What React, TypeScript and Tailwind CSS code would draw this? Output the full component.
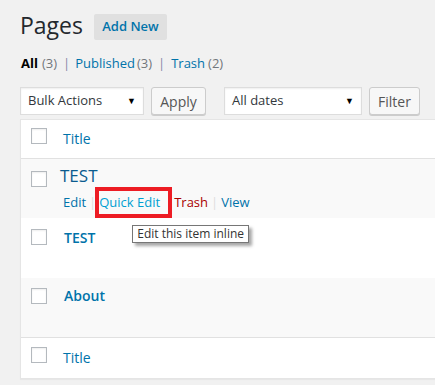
import React from "react";

const font = { fontFamily: '"Open Sans", "Liberation Sans", sans-serif' };

const Checkbox: React.FC = () => (
  <span className="block h-4 w-4 shrink-0 border border-[#b4b9be] bg-white shadow-[inset_0_1px_2px_rgba(0,0,0,0.07)]" />
);

const Select: React.FC<{ label: string; width: string }> = ({ label, width }) => (
  <div
    className={`flex h-7 items-center justify-between border border-[#ddd] bg-white pl-[7px] pr-[7px] text-[13px] text-[#32373c] shadow-[inset_0_1px_2px_rgba(0,0,0,0.07)] ${width}`}
  >
    <span>{label}</span>
    <span className="text-[9px] text-black">▼</span>
  </div>
);

const Button: React.FC<{ label: string; width: string }> = ({ label, width }) => (
  <div
    className={`flex h-7 items-center justify-center rounded-[3px] border border-[#ccc] bg-[#f7f7f7] text-[14px] text-[#555] shadow-[0_1px_0_#ccc] ${width}`}
  >
    {label}
  </div>
);

const Sep: React.FC = () => <span className="mx-[3px] text-[#ddd]">|</span>;

export default function App() {
  return (
    <div
      className="h-[385px] w-[435px] overflow-hidden bg-[#f1f1f1]"
      style={font}
    >
      <div className="pl-5 pt-[11px]">
        <div className="flex items-center gap-[11px]">
          <h1 className="text-[23px] font-normal leading-[29px] text-[#23282d]">
            Pages
          </h1>
          <div className="mt-[3px] flex h-[26px] w-[73px] items-center justify-center rounded-[2px] bg-[#e0e0e0] text-[13px] font-semibold text-[#0073aa]">
            Add New
          </div>
        </div>

        <div className="mt-[14px] flex h-5 items-center text-[13px] text-[#555]">
          <span className="ml-px font-bold text-black">All</span>
          <span className="ml-[4px] text-[#72777c]">(3)</span>
          <span className="ml-[6px] mr-[5px] text-[#8a86a8]">|</span>
          <span className="text-[#0073aa]">Published</span>
          <span className="ml-[2px] text-[#72777c]">(3)</span>
          <span className="mx-[6px] text-[#8a86a8]">|</span>
          <span className="text-[#0073aa]">Trash</span>
          <span className="ml-[3px] text-[#72777c]">(2)</span>
        </div>

        <div className="mt-[13px] flex items-center">
          <Select label="Bulk Actions" width="w-[124px]" />
          <div className="ml-[7px]">
            <Button label="Apply" width="w-[55px]" />
          </div>
          <div className="ml-[18px]">
            <Select label="All dates" width="w-[138px]" />
          </div>
          <div className="ml-[7px]">
            <Button label="Filter" width="w-[51px]" />
          </div>
        </div>

        <div className="relative mt-[4px] w-[440px] border border-[#e5e5e5] bg-white shadow-[0_1px_1px_rgba(0,0,0,0.04)]">
          <div className="flex h-[39px] items-start border-b border-[#e1e1e1] pl-[10px] pt-[8px]">
            <Checkbox />
            <span className="ml-[16px] mt-px text-[14px] leading-[20px] text-[#0073aa]">
              Title
            </span>
          </div>

          <div className="flex h-[59px] bg-[#f9f9f9] pl-[10px] pt-[7px]">
            <div className="pt-[5px]">
              <Checkbox />
            </div>
            <div className="ml-[13px] flex flex-col">
              <span className="text-[17px] leading-[20px] text-[#0a5b8f]">TEST</span>
              <div className="mt-[7px] flex items-center text-[13px] leading-[18px]">
                <span className="ml-[3px] text-[#0073aa]">Edit</span>
                <Sep />
                <span className="relative text-[#00a0d2]">
                  Quick Edit
                  <span className="absolute -bottom-[7px] -left-[4px] -right-[12px] -top-[6px] border-[4px] border-[#ed1c24]" />
                  <span className="absolute left-[33px] top-[32px] whitespace-nowrap border border-[#767676] bg-white px-[4px] text-[12px] leading-[16px] text-[#333] shadow-[3px_3px_3px_rgba(0,0,0,0.35)]">
                    Edit this item inline
                  </span>
                </span>
                <span className="ml-[14px] text-[#a00]">Trash</span>
                <Sep />
                <span className="text-[#0073aa]">View</span>
              </div>
            </div>
          </div>

          <div className="flex h-[60px] bg-white pl-[10px] pt-[10px]">
            <div className="pt-[1px]">
              <Checkbox />
            </div>
            <span className="ml-[17px] text-[14px] font-semibold leading-[20px] text-[#0073aa]">
              TEST
            </span>
          </div>

          <div className="flex h-[60px] border-b border-[#e1e1e1] bg-[#f9f9f9] pl-[10px] pt-[8px]">
            <div className="pt-[2px]">
              <Checkbox />
            </div>
            <span className="ml-[17px] text-[14px] font-semibold leading-[20px] text-[#0073aa]">
              About
            </span>
          </div>

          <div className="flex h-[40px] items-start pl-[10px] pt-[9px]">
            <Checkbox />
            <span className="ml-[16px] mt-px text-[14px] leading-[20px] text-[#0073aa]">
              Title
            </span>
          </div>
        </div>
      </div>
    </div>
  );
}
